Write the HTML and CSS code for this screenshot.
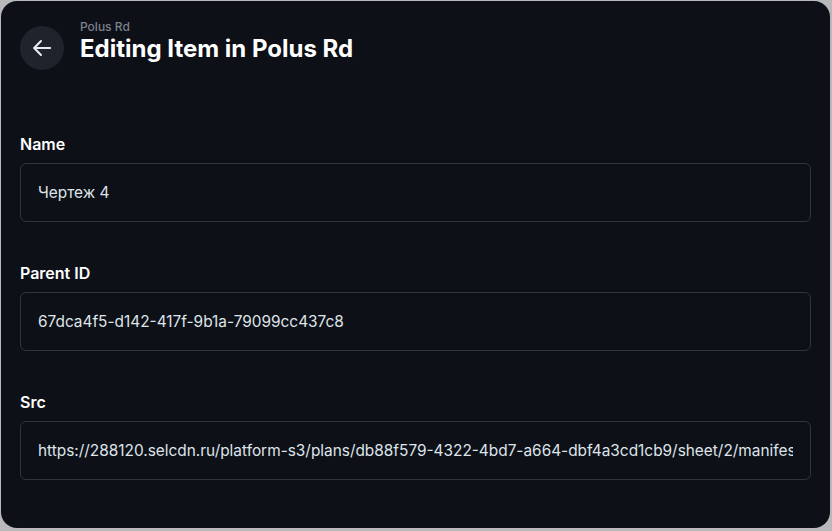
FILE: index.html
```html
<!DOCTYPE html>
<html lang="en">
<head>
<meta charset="utf-8">
<link rel="stylesheet" href="styles.css">
</head>
<body>
<div class="panel">
  <header class="header">
    <button class="back" type="button" aria-label="Back">
      <svg width="20" height="20" viewBox="0 0 20 20" fill="none" stroke="#e8ecf2" stroke-width="2" stroke-linecap="round" stroke-linejoin="round"><path d="M18.2 10H2.4"/><path d="M9 3L2.2 10L9 17"/></svg>
    </button>
    <div class="titles">
      <div class="crumb">Polus Rd</div>
      <h1 class="title">Editing Item in Polus Rd</h1>
    </div>
  </header>
  <form class="form">
    <div class="field">
      <label class="label">Name</label>
      <input class="input" type="text" value="Чертеж 4">
    </div>
    <div class="field">
      <label class="label">Parent ID</label>
      <input class="input" type="text" value="67dca4f5-d142-417f-9b1a-79099cc437c8">
    </div>
    <div class="field">
      <label class="label">Src</label>
      <input class="input" type="text" value="https://288120.selcdn.ru/platform-s3/plans/db88f579-4322-4bd7-a664-dbf4a3cd1cb9/sheet/2/manifest.json">
    </div>
  </form>
</div>
</body>
</html>
```
FILE: styles.css
```css
html, body {
  margin: 0;
  padding: 0;
  background: #b9b9bb;
  width: 832px;
  height: 531px;
  overflow: hidden;
}
body {
  font-family: Inter, "Noto Sans", sans-serif;
}
.panel {
  box-sizing: border-box;
  margin: 1px 0 0 1px;
  width: 829px;
  height: 527px;
  background: #0d1017;
  border-radius: 16px;
  padding: 25px 19px 0 19px;
}
.header {
  display: flex;
  align-items: flex-start;
  gap: 16px;
}
.back {
  width: 44px;
  height: 44px;
  border-radius: 50%;
  border: none;
  background: #1f232b;
  display: flex;
  align-items: center;
  justify-content: center;
  padding: 0;
  flex: none;
}
.titles {
  margin-top: -7px;
}
.crumb {
  font-size: 12px;
  line-height: 15px;
  color: #7b818c;
  font-weight: 500;
}
.title {
  margin: 0;
  font-size: 24px;
  line-height: 30px;
  font-weight: 700;
  color: #ffffff;
}
.form {
  margin-top: 64px;
  display: flex;
  flex-direction: column;
  gap: 41px;
}
.field {
  display: flex;
  flex-direction: column;
  gap: 9px;
}
.label {
  font-size: 16px;
  line-height: 20px;
  font-weight: 600;
  color: #ffffff;
}
.input {
  box-sizing: border-box;
  width: 791px;
  height: 59px;
  background: transparent;
  border: 1.5px solid #2f353e;
  border-radius: 6px;
  padding: 0 17px;
  font-family: Inter, "Noto Sans", sans-serif;
  font-size: 15.4px;
  color: #dfe4ea;
  outline: none;
}
```
